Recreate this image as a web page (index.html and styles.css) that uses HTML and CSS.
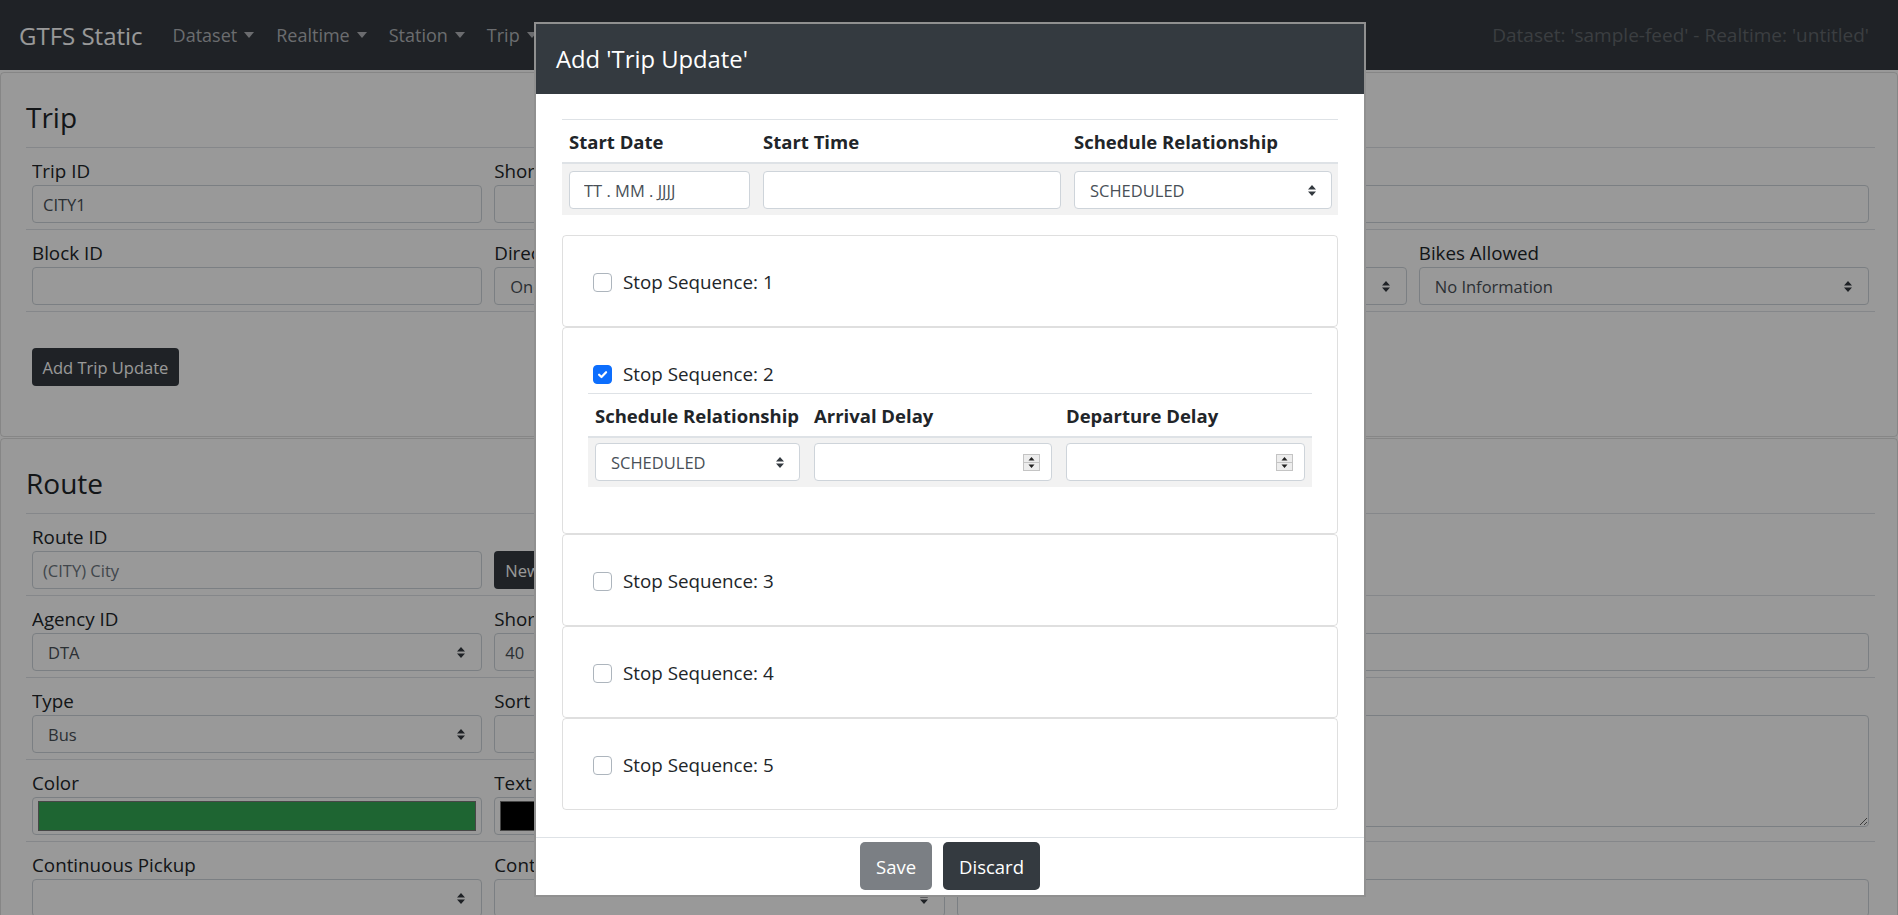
FILE: index.html
```html
<!DOCTYPE html>
<html lang="de">
<head>
<meta charset="utf-8">
<title>GTFS Static</title>
<link rel="stylesheet" href="styles.css">
</head>
<body>
<nav class="navbar">
  <span class="brand">GTFS Static</span>
  <ul class="nav">
    <li class="nav-link">Dataset<span class="caret"></span></li>
    <li class="nav-link">Realtime<span class="caret"></span></li>
    <li class="nav-link">Station<span class="caret"></span></li>
    <li class="nav-link">Trip<span class="caret"></span></li>
  </ul>
  <span class="nav-status">Dataset: 'sample-feed' - Realtime: 'untitled'</span>
</nav>

<main class="page">
  <section class="card card-trip">
    <h3 class="card-title">Trip</h3>
    <table class="ftable closed">
      <colgroup><col class="q"><col class="q"><col class="q"><col class="q"></colgroup>
      <tr>
        <td><label class="lbl">Trip ID</label><input class="fc" value="CITY1"></td>
        <td><label class="lbl">Short Name</label><input class="fc"></td>
        <td colspan="2"><label class="lbl">Headsign</label><input class="fc"></td>
      </tr>
      <tr>
        <td><label class="lbl">Block ID</label><input class="fc"></td>
        <td><label class="lbl">Direction</label><div class="fsel"><span>One direction</span><svg class="arrows" viewBox="0 0 8 11"><path d="M4 0L0 4.5h8zM0 6.5h8L4 11z" fill="#343a40"/></svg></div></td>
        <td><label class="lbl">Wheelchair</label><div class="fsel"><span>No Information</span><svg class="arrows" viewBox="0 0 8 11"><path d="M4 0L0 4.5h8zM0 6.5h8L4 11z" fill="#343a40"/></svg></div></td>
        <td><label class="lbl">Bikes Allowed</label><div class="fsel"><span>No Information</span><svg class="arrows" viewBox="0 0 8 11"><path d="M4 0L0 4.5h8zM0 6.5h8L4 11z" fill="#343a40"/></svg></div></td>
      </tr>
    </table>
    <button class="btn btn-dark btn-add">Add Trip Update</button>
  </section>

  <section class="card card-route">
    <h3 class="card-title">Route</h3>
    <table class="ftable">
      <colgroup><col class="q"><col class="q"><col class="q"><col class="q"></colgroup>
      <tr>
        <td><label class="lbl">Route ID</label><input class="fc" placeholder="(CITY) City"></td>
        <td><span class="lbl">&nbsp;</span><button class="btn btn-dark btn-new">New</button></td>
        <td colspan="2"></td>
      </tr>
      <tr>
        <td><label class="lbl">Agency ID</label><div class="fsel"><span>DTA</span><svg class="arrows" viewBox="0 0 8 11"><path d="M4 0L0 4.5h8zM0 6.5h8L4 11z" fill="#343a40"/></svg></div></td>
        <td><label class="lbl">Short Name</label><input class="fc" value="40"></td>
        <td colspan="2"><label class="lbl">Long Name</label><input class="fc" value="City"></td>
      </tr>
      <tr>
        <td><label class="lbl">Type</label><div class="fsel"><span>Bus</span><svg class="arrows" viewBox="0 0 8 11"><path d="M4 0L0 4.5h8zM0 6.5h8L4 11z" fill="#343a40"/></svg></div></td>
        <td><label class="lbl">Sort Order</label><input class="fc"></td>
        <td colspan="2" rowspan="2"><label class="lbl">Desc</label><textarea class="fta"></textarea></td>
      </tr>
      <tr>
        <td><label class="lbl">Color</label><div class="fcolor"><div class="swatch swatch-green"></div></div></td>
        <td><label class="lbl">Text Color</label><div class="fcolor"><div class="swatch swatch-black"></div></div></td>
      </tr>
      <tr>
        <td><label class="lbl">Continuous Pickup</label><div class="fsel"><span></span><svg class="arrows" viewBox="0 0 8 11"><path d="M4 0L0 4.5h8zM0 6.5h8L4 11z" fill="#343a40"/></svg></div></td>
        <td><label class="lbl">Continuous Drop Off</label><div class="fsel"><span></span><svg class="arrows" viewBox="0 0 8 11"><path d="M4 0L0 4.5h8zM0 6.5h8L4 11z" fill="#343a40"/></svg></div></td>
        <td colspan="2"><span class="lbl">&nbsp;</span><input class="fc"></td>
      </tr>
    </table>
  </section>
</main>

<div class="backdrop"></div>

<div class="modal">
  <div class="modal-header"><h4 class="modal-title">Add 'Trip Update'</h4></div>
  <div class="modal-body">
    <table class="mtable mtable-top">
      <colgroup><col class="t1"><col class="t2"><col class="t3"></colgroup>
      <thead><tr><th>Start Date</th><th>Start Time</th><th>Schedule Relationship</th></tr></thead>
      <tbody><tr>
        <td><input class="mi mi-date" value="TT . MM . JJJJ"></td>
        <td><input class="mi"></td>
        <td><div class="fsel msel"><span>SCHEDULED</span><svg class="arrows" viewBox="0 0 8 11"><path d="M4 0L0 4.5h8zM0 6.5h8L4 11z" fill="#343a40"/></svg></div></td>
      </tr></tbody>
    </table>

    <div class="stops">
      <div class="stop">
        <label class="check"><span class="cb"></span>Stop Sequence: 1</label>
      </div>
      <div class="stop">
        <label class="check"><span class="cb cb-on"><svg viewBox="0 0 20 20"><path d="M6 10.2l2.8 2.8L14.2 7.4" fill="none" stroke="#fff" stroke-width="2.6" stroke-linecap="round" stroke-linejoin="round"/></svg></span>Stop Sequence: 2</label>
        <table class="mtable mtable-inner">
          <colgroup><col class="i1"><col class="i2"><col class="i3"></colgroup>
          <thead><tr><th>Schedule Relationship</th><th>Arrival Delay</th><th>Departure Delay</th></tr></thead>
          <tbody><tr>
            <td><div class="fsel msel"><span>SCHEDULED</span><svg class="arrows" viewBox="0 0 8 11"><path d="M4 0L0 4.5h8zM0 6.5h8L4 11z" fill="#343a40"/></svg></div></td>
            <td><div class="num"><input class="num-in" type="text"><svg class="spin" viewBox="0 0 17 17"><rect x="0.5" y="0.5" width="16" height="16" fill="#ededed" stroke="#c4c4c4"/><line x1="1" y1="8.5" x2="16" y2="8.5" stroke="#c4c4c4"/><path d="M8.5 3L5.5 6.5h6z M5.5 10.5h6L8.5 14z" fill="#222"/></svg></div></td>
            <td><div class="num"><input class="num-in" type="text"><svg class="spin" viewBox="0 0 17 17"><rect x="0.5" y="0.5" width="16" height="16" fill="#ededed" stroke="#c4c4c4"/><line x1="1" y1="8.5" x2="16" y2="8.5" stroke="#c4c4c4"/><path d="M8.5 3L5.5 6.5h6z M5.5 10.5h6L8.5 14z" fill="#222"/></svg></div></td>
          </tr></tbody>
        </table>
      </div>
      <div class="stop">
        <label class="check"><span class="cb"></span>Stop Sequence: 3</label>
      </div>
      <div class="stop">
        <label class="check"><span class="cb"></span>Stop Sequence: 4</label>
      </div>
      <div class="stop">
        <label class="check"><span class="cb"></span>Stop Sequence: 5</label>
      </div>
    </div>
  </div>
  <div class="modal-footer">
    <button class="btn btn-lg btn-save">Save</button>
    <button class="btn btn-lg btn-discard">Discard</button>
  </div>
</div>
</body>
</html>
```

FILE: styles.css
```css
* { box-sizing: border-box; }
html, body { margin: 0; padding: 0; }
body {
  font-family: "Open Sans", "Noto Sans", Arial, sans-serif;
  color: #212529;
  background: #fff;
  overflow: hidden;
  height: 915px;
}

/* navbar */
.navbar {
  display: flex;
  align-items: center;
  height: 70px;
  background: #343a40;
  padding: 0 29px 0 19px;
}
.brand { font-size: 24px; color: #fff; margin-right: 19px; white-space: nowrap; }
.nav { display: flex; list-style: none; margin: 0; padding: 0; }
.nav-link {
  display: flex;
  align-items: center;
  padding: 0 11px;
  font-size: 18px;
  color: #b2b5b9;
  white-space: nowrap;
}
.caret {
  width: 0; height: 0;
  margin-left: 7px;
  border-top: 6px solid currentColor;
  border-left: 5px solid transparent;
  border-right: 5px solid transparent;
}
.nav-status { margin-left: auto; font-size: 19px; color: #63686d; white-space: nowrap; }

/* page cards */
.page { padding-top: 2px; }
.card {
  border: 1px solid rgba(0,0,0,.125);
  border-radius: 4px;
  padding: 27px 22px 50px 25px;
  margin-bottom: 1px;
}
.card-title { margin: 0 0 13px; font-size: 28px; line-height: 34px; font-weight: 400; }

.ftable { width: 100%; border-collapse: collapse; table-layout: fixed; }
.ftable col.q { width: 25%; }
.ftable td { border-top: 1px solid #dee2e6; padding: 11px 6px 6px; vertical-align: top; }
.ftable.closed { border-bottom: 1px solid #dee2e6; }

.lbl { display: block; font-size: 18.8px; line-height: 24px; margin-bottom: 2px; white-space: nowrap; overflow: hidden; }
.fc {
  display: block;
  width: 100%;
  height: 38px;
  border: 1px solid #ced4da;
  border-radius: 4px;
  padding: 0 10px;
  font-family: inherit;
  font-size: 16.5px;
  color: #495057;
  background: #fff;
}
.fc::placeholder { color: #6c757d; opacity: 1; }
.fsel {
  display: flex;
  align-items: center;
  justify-content: space-between;
  height: 38px;
  border: 1px solid #ced4da;
  border-radius: 4px;
  padding: 0 16px 0 15px;
  font-size: 16.5px;
  color: #495057;
  background: #fff;
  white-space: nowrap;
  overflow: hidden;
}
.arrows { width: 8px; height: 11px; flex: none; }
.fcolor { height: 38px; border: 1px solid #ced4da; border-radius: 4px; padding: 3px 5px; background: #fff; }
.swatch { height: 100%; border: 1px solid #777; }
.swatch-green { background: #33a854; }
.swatch-black { background: #000; }
.fta {
  display: block;
  width: 100%;
  height: 112px;
  resize: vertical;
  border: 1px solid #ced4da;
  border-radius: 4px;
  font-family: inherit;
  background: #fff;
}

.btn { font-family: inherit; border: 0; border-radius: 4px; color: #fff; white-space: nowrap; }
.btn-dark { background: #343a40; height: 38px; font-size: 16.5px; }
.btn-add { padding: 0 10.5px; margin: 36px 0 0 6px; }
.btn-new { padding: 0 11px; display: block; width: 96px; text-align: left; }

/* modal */
.backdrop { position: fixed; inset: 0; background: rgba(0,0,0,.4); z-index: 10; }
.modal {
  position: fixed;
  top: 22px;
  left: 534px;
  width: 832px;
  border: 2px solid #909090;
  background: #fff;
  z-index: 20;
}
.modal-header { height: 70px; background: #343a40; display: flex; align-items: center; padding: 0 20px; }
.modal-title { margin: 0; font-size: 23.8px; font-weight: 400; color: #fff; line-height: 1.2; }
.modal-body { padding: 25px 26px 27px 26px; }

.mtable { border-collapse: collapse; table-layout: fixed; width: 100%; }
.mtable th {
  text-align: left;
  font-weight: 700;
  font-size: 18.5px;
  line-height: 24px;
  padding: 10px 6px 8px 7px;
  border-top: 1px solid #dee2e6;
  border-bottom: 2px solid #dee2e6;
  white-space: nowrap;
}
.mtable td { background: #f2f2f2; padding: 7px 6px 6px 7px; }
.mtable-top col.t1 { width: 194px; }
.mtable-top col.t2 { width: 311px; }
.mtable-top col.t3 { width: 271px; }
.mtable-inner { margin: 7px 0 14px; }
.mtable-inner td { padding: 5px 7px 6px; }
.mtable-inner col.i1 { width: 219px; }
.mtable-inner col.i2 { width: 252px; }
.mtable-inner col.i3 { width: 253px; }

.mi {
  display: block;
  width: 100%;
  height: 38px;
  border: 1px solid #ced4da;
  border-radius: 4px;
  padding: 0 12px;
  font-family: inherit;
  font-size: 16.5px;
  color: #495057;
  background: #fff;
}
.mi-date { padding-left: 14px; }
.msel { padding-left: 15px; padding-right: 15px; }

.num {
  display: flex;
  align-items: center;
  height: 38px;
  border: 1px solid #ced4da;
  border-radius: 4px;
  padding: 0 11px 0 12px;
  background: #fff;
}
.num-in { flex: 1; min-width: 0; border: 0; outline: 0; padding: 0; font-family: inherit; font-size: 16.5px; background: transparent; }
.spin { width: 17px; height: 17px; flex: none; }

.stops { margin-top: 20px; }
.stop {
  border: 1px solid rgba(0,0,0,.125);
  border-radius: 4px;
  padding: 34px 25px 32px;
}
.check {
  display: flex;
  align-items: center;
  gap: 11px;
  margin-left: 5px;
  font-size: 18.8px;
  line-height: 24px;
  height: 24px;
}
.cb {
  width: 19px;
  height: 19px;
  flex: none;
  border: 1px solid #adb5bd;
  border-radius: 4px;
  background: #fff;
}
.cb-on { background: #0d6efd; border-color: #0d6efd; display: flex; }
.cb-on svg { width: 100%; height: 100%; }

.modal-footer {
  border-top: 1px solid #dee2e6;
  display: flex;
  justify-content: center;
  gap: 11px;
  padding: 4px 0 5px;
}
.btn-lg { height: 48px; padding: 0 16px; font-size: 18.5px; border-radius: 5px; }
.btn-save { background: #7b7f84; }
.btn-discard { background: #343a40; }
```
